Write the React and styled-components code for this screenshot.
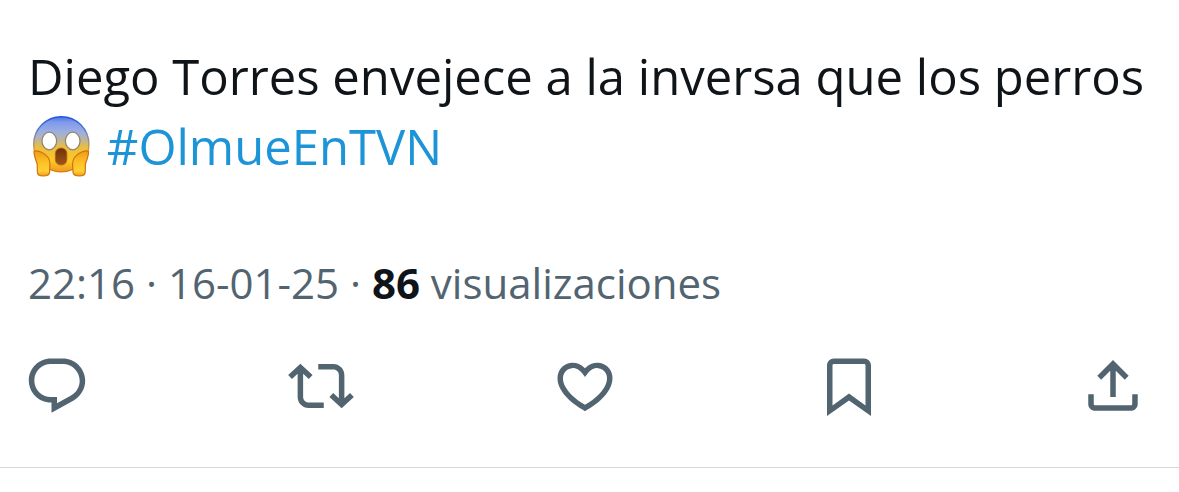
import React from "react";
import styled, { createGlobalStyle } from "styled-components";

const GlobalStyle = createGlobalStyle`
  *, *::before, *::after { box-sizing: border-box; }
  body {
    margin: 0;
    background: #ffffff;
    color: #0f1419;
    font-family: "Open Sans", "Noto Sans", sans-serif;
  }
`;

const Post = styled.article`
  padding: 41px 0 24px;
`;

const Body = styled.p`
  margin: 0;
  padding: 0 28px;
  font-size: 49px;
  line-height: 70px;
`;

const Hashtag = styled.a`
  color: #1d94d8;
  text-decoration: none;
`;

const Emoji = styled.svg`
  width: 66px;
  height: 62px;
  vertical-align: -12px;
`;

const Meta = styled.p`
  margin: 72px 0 0;
  padding: 0 28px;
  color: #536471;
  font-size: 42px;
  line-height: 60px;
`;

const Count = styled.strong`
  color: #0f1419;
  font-weight: 700;
`;

const Actions = styled.div`
  display: flex;
  justify-content: space-between;
  margin-top: 40px;
  padding: 0 33px 48px 24px;
  border-bottom: 1px solid #d3d8db;
`;

const ActionButton = styled.button`
  display: block;
  padding: 0;
  border: 0;
  background: none;
  color: #536471;
  cursor: pointer;

  svg {
    display: block;
    width: 66px;
    height: 66px;
    fill: currentColor;
  }
`;

const actions = [
  {
    label: "Responder",
    path: "M1.751 10c0-4.42 3.584-8 8.005-8h4.366c4.49 0 8.129 3.64 8.129 8.13 0 2.96-1.607 5.68-4.196 7.11l-8.054 4.46v-3.69h-.067c-4.49.1-8.183-3.51-8.183-8.01zm8.005-6c-3.317 0-6.005 2.69-6.005 6 0 3.37 2.77 6.08 6.138 6.01l.351-.01h1.761v2.3l5.087-2.81c1.951-1.08 3.163-3.13 3.163-5.36 0-3.39-2.744-6.13-6.129-6.13H9.756z",
  },
  {
    label: "Repostear",
    path: "M4.5 3.88l4.432 4.14-1.364 1.46L5.5 7.55V16c0 1.1.896 2 2 2H13v2H7.5c-2.209 0-4-1.79-4-4V7.55L1.432 9.48.068 8.02 4.5 3.88zM16.5 6H11V4h5.5c2.209 0 4 1.79 4 4v8.45l2.068-1.93 1.364 1.46-4.432 4.14-4.432-4.14 1.364-1.46 2.068 1.93V8c0-1.1-.896-2-2-2z",
  },
  {
    label: "Me gusta",
    path: "M16.697 5.5c-1.222-.06-2.679.51-3.89 2.16l-.805 1.09-.806-1.09C9.984 6.01 8.526 5.44 7.304 5.5c-1.243.07-2.349.78-2.91 1.91-.552 1.12-.633 2.78.479 4.82 1.074 1.97 3.257 4.27 7.129 6.61 3.87-2.34 6.052-4.64 7.126-6.61 1.111-2.04 1.03-3.7.477-4.82-.561-1.13-1.666-1.84-2.908-1.91zm4.187 7.69c-1.351 2.48-4.001 5.12-8.379 7.67l-.503.3-.504-.3c-4.379-2.55-7.029-5.19-8.382-7.67-1.36-2.5-1.41-4.86-.514-6.67.887-1.79 2.647-2.91 4.601-3.01 1.651-.09 3.368.56 4.798 2.01 1.429-1.45 3.146-2.1 4.796-2.01 1.954.1 3.714 1.22 4.601 3.01.896 1.81.846 4.17-.514 6.67z",
  },
  {
    label: "Guardar",
    path: "M4 4.5C4 3.12 5.119 2 6.5 2h11C18.881 2 20 3.12 20 4.5v18.44l-8-5.71-8 5.71V4.5zM6.5 4c-.276 0-.5.22-.5.5v14.56l6-4.29 6 4.29V4.5c0-.28-.224-.5-.5-.5h-11z",
  },
  {
    label: "Compartir",
    path: "M12 2.59l5.7 5.7-1.41 1.42L13 6.41V16h-2V6.41l-3.3 3.3-1.41-1.42L12 2.59zM21 15l-.02 3.51c0 1.38-1.12 2.49-2.5 2.49H5.5C4.11 21 3 19.88 3 18.5V15h2v3.5c0 .28.22.5.5.5h12.98c.28 0 .5-.22.5-.5L19 15h2z",
  },
];

function ScreamingFace() {
  return (
    <Emoji viewBox="0 0 66 62" role="img" aria-label="Cara gritando de miedo">
      <defs>
        <linearGradient id="face" x1="0" y1="0" x2="0" y2="1">
          <stop offset="0" stopColor="#4676e8" />
          <stop offset="0.1" stopColor="#8099ec" />
          <stop offset="0.28" stopColor="#9dafe2" />
          <stop offset="0.42" stopColor="#bdb59a" />
          <stop offset="0.56" stopColor="#ecbe3c" />
          <stop offset="0.8" stopColor="#fbc926" />
          <stop offset="1" stopColor="#ee9a1e" />
        </linearGradient>
        <linearGradient id="rim" x1="0" y1="0" x2="0" y2="1">
          <stop offset="0" stopColor="#1f57dc" />
          <stop offset="0.3" stopColor="#6b83c6" />
          <stop offset="0.48" stopColor="#a99467" />
          <stop offset="0.62" stopColor="#dd9626" />
          <stop offset="1" stopColor="#d9780f" />
        </linearGradient>
        <linearGradient id="hand" x1="0" y1="0" x2="0" y2="1">
          <stop offset="0" stopColor="#ee9a1c" />
          <stop offset="0.45" stopColor="#fdc024" />
          <stop offset="0.8" stopColor="#ffd033" />
          <stop offset="1" stopColor="#ee9c1c" />
        </linearGradient>
        <linearGradient id="mouth" x1="0" y1="0" x2="0" y2="1">
          <stop offset="0" stopColor="#6e3208" />
          <stop offset="1" stopColor="#a0561a" />
        </linearGradient>
        <path
          id="palm"
          d="M6 36.5C8 35.5 11 36 14 37.5C19 40 22 44 22 49C22 52 21.6 54 21.6 57C21.6 60 18.5 61 15 61C11.5 61 9.4 60 9.4 57L9.2 49C8 45.500 6 41 6 36.500Z"
        />
      </defs>
      <ellipse cx="33.3" cy="29.300" rx="27.6" ry="27.6" fill="url(#face)" stroke="url(#rim)" strokeWidth="1.4" />
      <ellipse cx="21.300" cy="26" rx="7.300" ry="8.800" fill="#fff" stroke="#8f8470" strokeWidth="1.200" />
      <ellipse cx="44.7" cy="26" rx="7.300" ry="8.800" fill="#fff" stroke="#8f8470" strokeWidth="1.200" />
      <rect x="27.300" y="33" width="11.6" height="17" rx="5.500" fill="url(#mouth)" stroke="#b8681a" strokeWidth="0.8" />
      <g fill="url(#hand)" stroke="#cf7210" strokeWidth="1.200" strokeLinejoin="round">
        <use href="#palm" />
        <use href="#palm" transform="translate(66.600 0) scale(-1 1)" />
      </g>
    </Emoji>
  );
}

export default function App() {
  return (
    <>
      <GlobalStyle />
      <Post>
        <Body>
          Diego Torres envejece a la inversa que los perros <ScreamingFace />{" "}
          <Hashtag href="#OlmueEnTVN">#OlmueEnTVN</Hashtag>
        </Body>
        <Meta>
          22:16 · 16-01-25 · <Count>86</Count> visualizaciones
        </Meta>
        <Actions>
          {actions.map(({ label, path }) => (
            <ActionButton key={label} type="button" aria-label={label}>
              <svg viewBox="0 0 24 24" aria-hidden="true">
                <path d={path} />
              </svg>
            </ActionButton>
          ))}
        </Actions>
      </Post>
    </>
  );
}
